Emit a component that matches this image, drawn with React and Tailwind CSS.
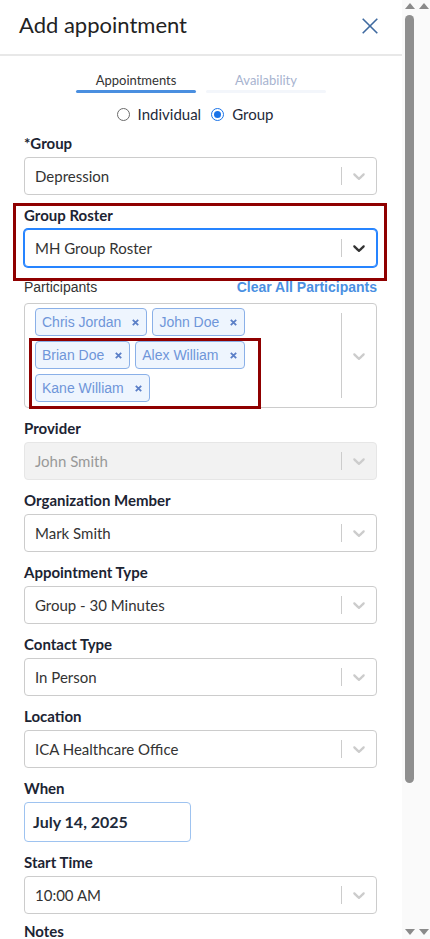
import React from "react";

const Chevron = ({ dark }) => (
  <svg viewBox="0 0 20 20" width="20" height="20" className={dark ? "fill-[#333333]" : "fill-[#cccccc]"}>
    <path d="M4.516 7.548c0.436-0.446 1.043-0.481 1.576 0l3.908 3.747 3.908-3.747c0.533-0.481 1.141-0.446 1.574 0 0.436 0.445 0.408 1.197 0 1.615-0.406 0.418-4.695 4.502-4.695 4.502-0.217 0.223-0.502 0.335-0.787 0.335s-0.57-0.112-0.789-0.335c0 0-4.287-4.084-4.695-4.502s-0.436-1.17 0-1.615z" />
  </svg>
);

const Indicator = ({ dark }) => (
  <div className="flex items-center self-stretch">
    <span className="w-px self-stretch my-[9px] bg-[#cccccc]" />
    <div className="px-[7px] flex items-center">
      <Chevron dark={dark} />
    </div>
  </div>
);

const Label = ({ children }) => (
  <div className="leading-[22px] text-[15px] font-bold text-[#1c2433] mb-[3px]">{children}</div>
);

const Select = ({ label, value, disabled, focused }) => (
  <div className="mb-[9px]">
    <Label>{label}</Label>
    <div
      className={`h-[38px] flex items-center rounded-[4px] border ${
        disabled
          ? "bg-[#f2f2f2] border-[#e6e6e6]"
          : focused
          ? "bg-white border-[#2684ff] shadow-[0_0_0_1px_#2684ff]"
          : "bg-white border-[#cccccc]"
      }`}
    >
      <div className={`flex-1 pl-[10px] text-[15px] ${disabled ? "text-[#999999]" : "text-[#333333]"}`}>
        {value}
      </div>
      <Indicator dark={focused} />
    </div>
  </div>
);

const Chip = ({ name }) => (
  <div className="h-[28px] flex items-center rounded-[4px] border border-[#8ab0e8] bg-[#eef5fe] pl-[6px] pr-[7px]">
    <span className="text-[14px] text-[#6f95d9] font-['Liberation_Sans',sans-serif]">{name}</span>
    <svg width="7" height="7" viewBox="0 0 7 7" className="ml-[11px]">
      <path d="M0.8 0.8L6.2 6.2M6.2 0.8L0.8 6.2" stroke="#5b7fc7" strokeWidth="1.8" />
    </svg>
  </div>
);

const Arrow = ({ down }) => (
  <span
    className={`w-0 h-0 border-x-[5px] border-x-transparent ${
      down ? "border-t-[6px] border-t-[#8a8a8a]" : "border-b-[6px] border-b-[#8a8a8a]"
    }`}
  />
);

export default function App() {
  const participants = ["Chris Jordan", "John Doe", "Brian Doe", "Alex William", "Kane William"];

  return (
    <div className="flex h-[939px] w-[430px] overflow-hidden bg-[#fafafa] font-['Lato',sans-serif]">
      <div className="relative w-[402px] shrink-0 bg-white overflow-hidden">
        {/* header */}
        <div className="h-[56px] border-b-2 border-[#e8e8e8] flex items-center justify-between pl-[19px] pr-[24px]">
          <h1 className="text-[22px] text-[#222222] leading-none -mt-[4px]">Add appointment</h1>
          <svg width="16" height="16" viewBox="0 0 16 16" className="-mt-[2px]">
            <path d="M0.7 0.7L15.3 15.3M15.3 0.7L0.7 15.3" stroke="#3f6aa0" strokeWidth="1.6" />
          </svg>
        </div>

        {/* tabs */}
        <div className="flex justify-center gap-[10px] pt-[15px]">
          <div className="w-[120px] flex flex-col items-center">
            <span className="text-[13px] leading-[18px] text-[#333333]">Appointments</span>
            <span className="mt-[1px] h-[3px] w-full rounded-full bg-[#4a8fe0]" />
          </div>
          <div className="w-[120px] flex flex-col items-center">
            <span className="text-[13px] leading-[18px] text-[#a7b3cf]">Availability</span>
            <span className="mt-[1px] h-[3px] w-full rounded-full bg-[#f3f6fb]" />
          </div>
        </div>

        {/* type radios */}
        <div className="mt-[11px] h-[20px] flex items-center justify-center pr-[12px] text-[15px] text-[#1e2a3a]">
          <span className="w-[13px] h-[13px] rounded-full border border-[#6b6b6b]" />
          <span className="ml-[8px]">Individual</span>
          <span className="ml-[10px] w-[13px] h-[13px] rounded-full border-[1.5px] border-[#1a73e8] flex items-center justify-center">
            <span className="w-[7px] h-[7px] rounded-full bg-[#1a73e8]" />
          </span>
          <span className="ml-[8px]">Group</span>
        </div>

        {/* form */}
        <div className="mt-[8px] pl-[24px] pr-[25px]">
          <Select label="*Group" value="Depression" />
          <Select label="Group Roster" value="MH Group Roster" focused />

          <div className="mb-[9px]">
            <div className="flex items-center justify-between leading-[22px] mb-[5px]">
              <span className="text-[14px] text-[#333333] font-['Liberation_Sans',sans-serif]">Participants</span>
              <span className="text-[14px] font-bold text-[#4a90e2] font-['Liberation_Sans',sans-serif]">
                Clear All Participants
              </span>
            </div>
            <div className="h-[105px] flex rounded-[4px] border border-[#cccccc] bg-white">
              <div className="flex-1 flex flex-wrap content-start gap-x-[5px] gap-y-[5px] pl-[10px] pt-[4px] pr-[6px]">
                {participants.map((p) => (
                  <Chip key={p} name={p} />
                ))}
              </div>
              <Indicator />
            </div>
          </div>

          <Select label="Provider" value="John Smith" disabled />
          <Select label="Organization Member" value="Mark Smith" />
          <Select label="Appointment Type" value="Group - 30 Minutes" />
          <Select label="Contact Type" value="In Person" />
          <Select label="Location" value="ICA Healthcare Office" />

          <div className="mb-[9px]">
            <Label>When</Label>
            <div className="w-[167px] h-[40px] flex items-center rounded-[4px] border border-[#9ec3f0] pl-[8px] text-[16px] font-bold text-[#1e2a3a]">
              July 14, 2025
            </div>
          </div>

          <div className="-mb-[3px]">
            <Select label="Start Time" value="10:00 AM" />
          </div>
          <Label>Notes</Label>
        </div>

        {/* annotation boxes */}
        <div className="absolute left-[13px] top-[203px] w-[374px] h-[78px] border-[3px] border-[#8f0000]" />
        <div className="absolute left-[29px] top-[338px] w-[232px] h-[71px] border-[3px] border-[#8f0000]" />
      </div>

      {/* scrollbars */}
      <div className="w-[15px] flex flex-col items-center pt-[3px] pb-[4px]">
        <Arrow />
        <span className="mt-[6px] w-[9px] h-[768px] rounded-full bg-[#8f8f8f]" />
        <span className="flex-1" />
        <Arrow down />
      </div>
      <div className="w-[13px] flex flex-col items-center pt-[3px] pb-[4px]">
        <Arrow />
        <span className="flex-1" />
        <Arrow down />
      </div>
    </div>
  );
}
